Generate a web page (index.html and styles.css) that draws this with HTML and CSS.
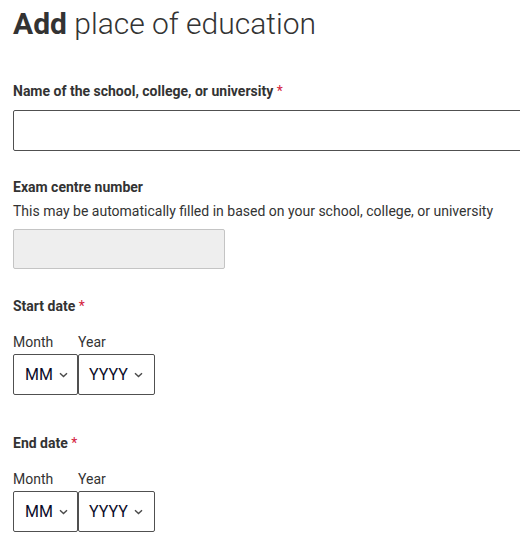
FILE: index.html
```html
<!DOCTYPE html>
<html lang="en">
<head>
<meta charset="utf-8">
<title>Add place of education</title>
<link rel="stylesheet" href="styles.css">
</head>
<body>
<main class="page">
  <h1 class="title"><strong>Add</strong> place of education</h1>

  <div class="field field-school">
    <label class="label" for="school">Name of the school, college, or university <span class="req">*</span></label>
    <div class="input-clip">
      <input class="text-input" id="school" type="text">
    </div>
  </div>

  <div class="field field-centre">
    <label class="label" for="centre">Exam centre number</label>
    <p class="hint">This may be automatically filled in based on your school, college, or university</p>
    <input class="text-input disabled" id="centre" type="text" disabled>
  </div>

  <div class="field field-start">
    <div class="label">Start date <span class="req">*</span></div>
    <div class="date-grid">
      <span class="sub-label">Month</span>
      <span class="sub-label">Year</span>
      <div class="select month"><span class="select-text">MM</span><svg class="chev" width="9" height="6" viewBox="0 0 9 6"><path d="M1 1.2 L4.5 4.6 L8 1.2" fill="none" stroke="#4a4a4a" stroke-width="1.4"/></svg></div>
      <div class="select year"><span class="select-text">YYYY</span><svg class="chev" width="9" height="6" viewBox="0 0 9 6"><path d="M1 1.2 L4.5 4.6 L8 1.2" fill="none" stroke="#4a4a4a" stroke-width="1.4"/></svg></div>
    </div>
  </div>

  <div class="field field-end">
    <div class="label">End date <span class="req">*</span></div>
    <div class="date-grid">
      <span class="sub-label">Month</span>
      <span class="sub-label">Year</span>
      <div class="select month"><span class="select-text">MM</span><svg class="chev" width="9" height="6" viewBox="0 0 9 6"><path d="M1 1.2 L4.5 4.6 L8 1.2" fill="none" stroke="#4a4a4a" stroke-width="1.4"/></svg></div>
      <div class="select year"><span class="select-text">YYYY</span><svg class="chev" width="9" height="6" viewBox="0 0 9 6"><path d="M1 1.2 L4.5 4.6 L8 1.2" fill="none" stroke="#4a4a4a" stroke-width="1.4"/></svg></div>
    </div>
  </div>
</main>
</body>
</html>
```

FILE: styles.css
```css
html, body {
  margin: 0;
  padding: 0;
  background: #fff;
}
body {
  font-family: Roboto, "Liberation Sans", Arial, sans-serif;
  color: #333;
  overflow: hidden;
}
.page {
  padding: 6px 0 0 13px;
}
.title {
  margin: 0;
  font-size: 30px;
  line-height: 36px;
  font-weight: 300;
  color: #333;
}
.title strong {
  font-weight: 700;
}
.field {
  display: flex;
  flex-direction: column;
  align-items: flex-start;
}
.field-school {
  margin-top: 39px;
  align-items: stretch;
}
.field-centre { margin-top: 26px; }
.field-start { margin-top: 27px; }
.field-end { margin-top: 38px; }
.label {
  font-size: 14px;
  line-height: 20px;
  font-weight: 700;
  color: #333;
}
.req {
  color: #d4213d;
  font-weight: 400;
}
.hint {
  margin: 4px 0 0;
  font-size: 14px;
  line-height: 20px;
  color: #333;
}
.input-clip {
  margin-top: 9px;
  overflow: hidden;
}
.text-input {
  display: block;
  box-sizing: border-box;
  margin: 0;
  width: calc(100% + 4px);
  height: 41px;
  border: 1px solid #505050;
  border-radius: 2px;
  background: #fff;
  font: inherit;
  padding: 0 10px;
}
.text-input.disabled {
  margin-top: 8px;
  width: 212px;
  height: 40px;
  background: #eeeeee;
  border-color: #c4c4c4;
}
.date-grid {
  margin-top: 16px;
  display: grid;
  grid-template-columns: 65px 77px;
  row-gap: 2px;
}
.sub-label {
  font-size: 14px;
  line-height: 20px;
  color: #333;
}
.select {
  box-sizing: border-box;
  height: 41px;
  border: 1px solid #505050;
  border-radius: 2px;
  display: flex;
  align-items: center;
  padding-left: 11px;
  gap: 6px;
  color: #0b0c2a;
}
.select.year {
  padding-left: 10px;
}
.select-text {
  font-size: 16px;
  line-height: 20px;
}
.chev {
  display: block;
  margin-top: 1px;
}
```
